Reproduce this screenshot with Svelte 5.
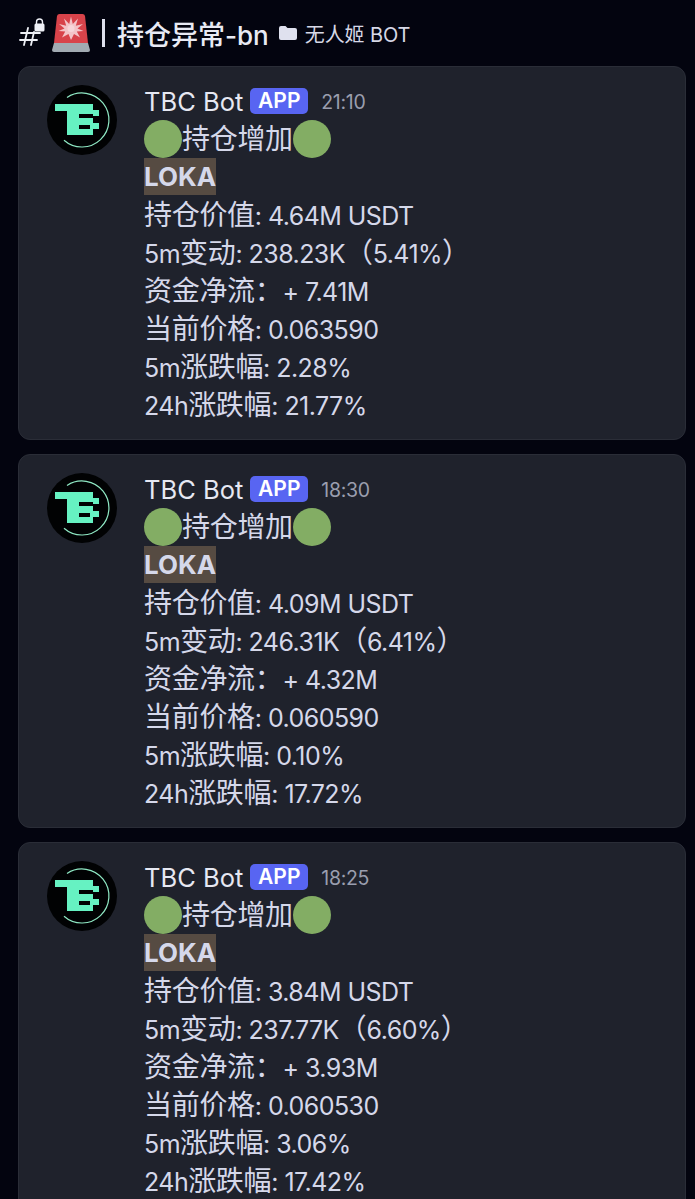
<script lang="ts">
	const messages = [
		{ time: '21:10', value: '4.64M', change: '238.23K', pct: '5.41%', flow: '+ 7.41M', price: '0.063590', m5: '2.28%', h24: '21.77%' },
		{ time: '18:30', value: '4.09M', change: '246.31K', pct: '6.41%', flow: '+ 4.32M', price: '0.060590', m5: '0.10%', h24: '17.72%' },
		{ time: '18:25', value: '3.84M', change: '237.77K', pct: '6.60%', flow: '+ 3.93M', price: '0.060530', m5: '3.06%', h24: '17.42%' }
	];
</script>

<div class="page">
	<header class="topbar">
		<svg class="hash" viewBox="0 0 26 30" width="26" height="30">
			<g fill="none" stroke="#eef0f6" stroke-width="1.8" stroke-linecap="round">
				<path d="M9 11 L5 28" />
				<path d="M15 15 L12 28" />
				<path d="M2 16 H21" />
				<path d="M1 23 H18" />
			</g>
			<path d="M17.500 7 V5 a3 3 0 0 1 6 0 V7" fill="none" stroke="#eef0f6" stroke-width="1.400" />
			<rect x="15.500" y="6.500" width="10" height="8" rx="1.500" fill="#eef0f6" />
		</svg>
		<svg class="siren" viewBox="0 0 38 38" width="38" height="38">
			<path d="M5 2 Q5.500 0 7.500 0 H30.500 Q32.500 0 33 2 L36 29 H2 Z" fill="#d8434a" />
			<path d="M2 29 H36 L38 36 Q38 38 36 38 H2 Q0 38 0 36 Z" fill="#a2abb2" />
			<path fill="#f3c4c8" d="M19 2.500 L20.800 10 L26 4.500 L23.800 11.800 L31 10 L25.500 14.500 L31.500 17 L24.800 17.500 L28 23.500 L22 20 L19 26 L16.500 20 L10 23.500 L13.200 17.500 L6.500 17 L12.500 14.500 L7 10 L14.200 11.800 L12 4.500 L17.200 10 Z" />
			<circle cx="19" cy="14.500" r="3.500" fill="#f7d6d9" />
		</svg>
		<span class="sep"></span>
		<h1><span class="zh">持仓异常</span>-bn</h1>
		<svg class="folder" viewBox="0 0 18 16" width="18" height="16">
			<path d="M0 3 Q0 1 2 1 H6.500 L8.500 3 H16 Q18 3 18 5 V13 Q18 15 16 15 H2 Q0 15 0 13 Z" fill="#dfe1ee" />
		</svg>
		<span class="category">无人姬 BOT</span>
	</header>

	<main class="list">
		{#each messages as m}
			<article class="card">
				<svg class="avatar" viewBox="0 0 70 70" width="70" height="70">
					<circle cx="35" cy="35" r="35" fill="#010203" />
					<path d="M20 12.500 A27 27 0 1 1 17 55.200" fill="none" stroke="#8fe8c4" stroke-width="1.200" />
					<path fill="#66f2c2" d="M8 19 H46 V25 H52 V31 H46 V29 H32 V33 H46 V38 H52 V44 H46 V50 H20 V26 H8 Z" />
					<path fill="#010203" d="M32 40 H43 V44 H32 Z" />
				</svg>
				<div class="body">
					<div class="meta">
						<span class="name">TBC Bot</span>
						<span class="tag">APP</span>
						<span class="time">{m.time}</span>
					</div>
					<div class="line title"><i class="dot"></i><span class="zh">持仓增加</span><i class="dot"></i></div>
					<div class="line"><b class="coin">LOKA</b></div>
					<div class="line"><span class="zh">持仓价值</span>: {m.value} USDT</div>
					<div class="line">5m<span class="zh">变动</span>: {m.change}<span class="zh">（</span>{m.pct}<span class="zh">）</span></div>
					<div class="line"><span class="zh">资金净流：</span>{m.flow}</div>
					<div class="line"><span class="zh">当前价格</span>: {m.price}</div>
					<div class="line">5m<span class="zh">涨跌幅</span>: {m.m5}</div>
					<div class="line">24h<span class="zh">涨跌幅</span>: {m.h24}</div>
				</div>
			</article>
		{/each}
	</main>
</div>

<style>
	:global(body) {
		margin: 0;
		background: #03040f;
	}

	.page {
		width: 695px;
		height: 1199px;
		overflow: hidden;
		background: #03040f;
		color: #d5d8ea;
		font-family: Inter, "Noto Sans CJK SC", sans-serif;
	}

	.zh {
		font-size: 28px;
		letter-spacing: -0.3px;
	}

	.topbar {
		display: flex;
		align-items: center;
		height: 66px;
		padding-left: 19px;
		box-sizing: border-box;
	}

	.hash {
		margin-top: -3px;
	}

	.siren {
		margin-left: 7px;
		margin-top: -1px;
	}

	.sep {
		width: 3px;
		height: 28px;
		margin-left: 12px;
		background: #dfe1ee;
	}

	h1 {
		margin: 0 0 0 12px;
		font-size: 26px;
		font-weight: 500;
		color: #e8eaf4;
	}

	h1 .zh {
		font-size: 27px;
		letter-spacing: 0;
	}

	.folder {
		margin-left: 10px;
	}

	.category {
		margin-left: 8px;
		font-size: 20px;
		letter-spacing: -0.1px;
		color: #d6d8e6;
	}

	.list {
		display: flex;
		flex-direction: column;
		gap: 14px;
		padding: 0 9px 0 18px;
	}

	.card {
		display: flex;
		flex: none;
		height: 374px;
		box-sizing: border-box;
		padding: 18px 0 0 28px;
		background: #1f222c;
		border: 1px solid #2a2d37;
		border-radius: 12px;
	}

	.avatar {
		flex: none;
	}

	.body {
		margin-left: 27px;
		font-size: 25px;
		letter-spacing: -0.55px;
		line-height: 38px;
		white-space: nowrap;
	}

	.meta {
		display: flex;
		align-items: center;
		height: 32px;
		letter-spacing: 0;
	}

	.name {
		margin-top: 1px;
		font-size: 25.5px;
		color: #e6e8f2;
	}

	.tag {
		margin-left: 7px;
		width: 58px;
		text-align: center;
		height: 26px;
		line-height: 26px;
		font-size: 21px;
		font-weight: 600;
		color: #fff;
		background: #5865f2;
		border-radius: 5px;
	}

	.time {
		margin: 2px 0 0 13px;
		font-size: 19.5px;
		letter-spacing: -0.3px;
		color: #9a9eae;
	}

	.line {
		height: 38px;
	}

	.title {
		display: flex;
		align-items: center;
		height: 38px;
		margin-top: 3px;
	}

	.dot {
		width: 38px;
		height: 38px;
		border-radius: 50%;
		background: #83ad64;
	}

	.coin {
		display: inline-block;
		height: 37px;
		background: #564b42;
		font-size: 26px;
		font-weight: 700;
		letter-spacing: 0;
		color: #d5d8ea;
	}
</style>
